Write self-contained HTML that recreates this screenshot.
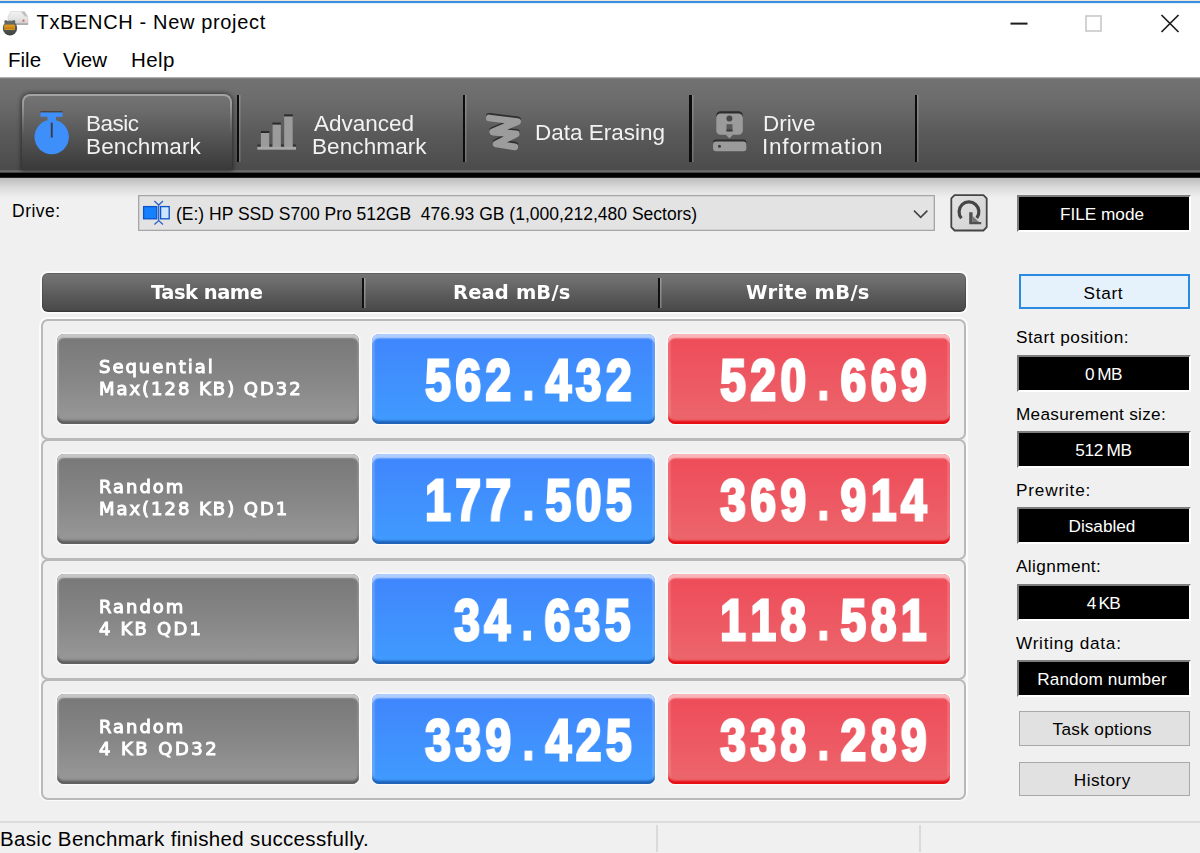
<!DOCTYPE html>
<html lang="en">
<head>
<meta charset="utf-8">
<title>TxBENCH - New project</title>
<style>
html,body{margin:0;padding:0;}
body{width:1200px;height:853px;overflow:hidden;background:#f0f0f0;position:relative;
  font-family:"Liberation Sans","DejaVu Sans",sans-serif;color:#000;}
.abs{position:absolute;}
.t{position:absolute;white-space:nowrap;line-height:1;transform-origin:0 0;}
/* title + menu */
#titlebar{left:0;top:0;width:1200px;height:78px;background:#fff;}
#topline{left:0;top:0;width:1200px;height:4px;background:linear-gradient(#efe6d6 0,#efe6d6 1px,#3b8fe3 1px,#3b8fe3 3px,#cfe3f7 3px,#fff 4px);}
/* toolbar */
#toolbar{left:0;top:77px;width:1200px;height:94px;background:linear-gradient(#d8d8d8 0,#8a8a8a 1px,#727272 2px,#6c6c6c 25%,#5a5a5a 60%,#4b4b4b 100%);}
#blackline{left:0;top:170px;width:1200px;height:8px;background:linear-gradient(#525252 0,#6e6e6e .8px,#6e6e6e 2.2px,#000 3px,#000 7.3px,#888 8px);}
#shine{left:0;top:178px;width:1200px;height:20px;background:linear-gradient(#bdbdbd 0,#c6c6c6 3px,#dcdcdc 10px,#f0f0f0 20px);}
.tabsep{width:2.2px;top:95px;height:66.5px;background:#0c0c0c;box-shadow:1.5px 0 0 rgba(255,255,255,.2);}
#tabsel{left:21.5px;top:94px;width:210px;height:76.3px;box-sizing:border-box;border-radius:8px 8px 0 0;background:linear-gradient(#757575 0,#696969 25%,#4c4c4c 70%,#393939 100%);box-shadow:0 0 4px 1px rgba(0,0,0,.5);}
#tabbd{left:21.5px;top:94px;width:210px;height:76px;box-sizing:border-box;border:2px solid #a4a4a4;border-bottom:none;border-radius:8px 8px 0 0;-webkit-mask-image:linear-gradient(#000 0,rgba(0,0,0,.9) 10%,rgba(0,0,0,.3) 35%,transparent 55%);mask-image:linear-gradient(#000 0,rgba(0,0,0,.9) 10%,rgba(0,0,0,.3) 35%,transparent 55%);}
.tabtxt{color:#f2f2f2;font-size:22.5px;will-change:transform;}
/* content */
.lbl{font-size:17.2px;color:#000;}
.blackbox{left:1017px;width:174px;height:37px;box-sizing:border-box;background:#000;border:2px solid;border-color:#7d7d7d #fff #fff #7d7d7d;color:#fff;font-size:17.2px;text-align:center;line-height:35px;white-space:nowrap;padding-right:4px;}
.btn{left:1018.7px;width:171.2px;height:34.8px;box-sizing:border-box;background:#e1e1e1;border:1px solid #a9a9a9;font-size:17.2px;text-align:center;line-height:35px;white-space:nowrap;padding-right:4px;}
#hdr{left:41.5px;top:272.8px;width:924.3px;height:39.5px;border-radius:6px;background:linear-gradient(#757575 0,#6b6b6b 25%,#595959 60%,#4a4a4a 94%,#3e3e3e 100%);box-shadow:0 0 0 1.8px rgba(255,255,255,.8), inset 0 0 0 1px rgba(0,0,0,.16);}
.hsep{width:2.4px;top:277.6px;height:30.3px;background:#101010;box-shadow:1.5px 0 0 rgba(255,255,255,.3);}
.htxt{will-change:transform;color:#fff;font-family:"DejaVu Sans","Liberation Sans",sans-serif;font-weight:bold;font-size:19.5px;}
.row{left:41px;width:925px;height:121px;box-sizing:border-box;border:2px solid #b9b9b9;border-radius:7px;}
#rowsbg{left:39.4px;top:317.2px;width:928.2px;height:484px;border-radius:8.5px;background:rgba(255,255,255,.7);}
#rowsbg2{left:41.3px;top:319px;width:924.5px;height:480px;border-radius:6.5px;background:#f0f0f0;}
.cell{height:89.6px;box-sizing:border-box;border-radius:7px;}
.task{left:56.8px;width:302px;background:linear-gradient(#757575 0,#7a7a7a 8%,#868686 50%,#969696 92%,#8a8a8a 100%);box-shadow:0 0 0 1.5px rgba(255,255,255,.6), inset 0 4px 1.5px #c6c6c6, inset 0 -3.2px 2px #606060, inset 2px 0 1px #9c9c9c, inset -2px 0 1px #8c8c8c;}
.rd{left:372.2px;width:282.6px;background:linear-gradient(#3f85fd 0,#4090fd 50%,#409bfe 100%);box-shadow:0 0 0 1.5px rgba(255,255,255,.6), inset 0 4.2px 1.5px #b2cefe, inset 0 -3.2px 2px #1f62b8, inset 2.5px 0 1.5px rgba(255,255,255,.22), inset -2.5px 0 1.5px rgba(255,255,255,.22);}
.wr{left:668px;width:282.2px;background:linear-gradient(#ee4b58 0,#ed5862 50%,#ec676d 100%);box-shadow:0 0 0 1.5px rgba(255,255,255,.6), inset 0 4.2px 1.5px #f9b6ba, inset 0 -3.2px 2px #e60f14, inset 2.5px 0 1.5px rgba(255,255,255,.2), inset -2.5px 0 1.5px rgba(255,255,255,.2);}
.tasktxt{will-change:transform;color:#fff;font-family:"DejaVu Sans","Liberation Sans",sans-serif;font-size:18px;letter-spacing:1.97px;-webkit-text-stroke:1px #fff;}
.num{will-change:transform;color:#fff;font-weight:bold;font-size:57.2px;-webkit-text-stroke:3px #fff;transform:scaleX(.805);}
.num span{display:inline-block;width:37.4px;text-align:center;}
.num .dot{-webkit-text-stroke:1.2px #fff;}
#status{left:0;top:821px;width:1200px;height:32px;border-top:2px solid #dcdcdc;background:#f0f0f0;box-sizing:border-box;}
.ssep{width:2px;top:825px;height:26.5px;background:#dadada;}
</style>
</head>
<body>
<div id="titlebar" class="abs"></div>
<div id="topline" class="abs"></div>
<div id="toolbar" class="abs"></div>
<div id="blackline" class="abs"></div>
<div id="shine" class="abs"></div>


<!-- title text -->
<div class="t" id="title" style="left:36.6px;top:11.6px;font-size:20px;letter-spacing:.65px;">TxBENCH - New project</div>
<div class="t" id="m1" style="left:8px;top:49.8px;font-size:20.5px;">File</div>
<div class="t" id="m2" style="left:63px;top:49.8px;font-size:20.5px;">View</div>
<div class="t" id="m3" style="left:131px;top:49.8px;font-size:20.5px;letter-spacing:.4px;">Help</div>

<!-- tabs -->
<div id="tabsel" class="abs"></div>
<div id="tabbd" class="abs"></div>
<div class="abs tabsep" style="left:237.3px"></div>
<div class="abs tabsep" style="left:463.3px"></div>
<div class="abs tabsep" style="left:689.4px"></div>
<div class="abs tabsep" style="left:915px"></div>
<div class="t tabtxt" id="tb1a" style="left:85.8px;top:113px;letter-spacing:-.5px;">Basic</div>
<div class="t tabtxt" id="tb1b" style="left:85.8px;top:135.5px;letter-spacing:.12px;">Benchmark</div>
<div class="t tabtxt" id="tb2a" style="left:314px;top:113px;">Advanced</div>
<div class="t tabtxt" id="tb2b" style="left:312.4px;top:135.5px;letter-spacing:.1px;">Benchmark</div>
<div class="t tabtxt" id="tb3" style="left:534.5px;top:121.9px;">Data Erasing</div>
<div class="t tabtxt" id="tb4a" style="left:762.5px;top:113px;">Drive</div>
<div class="t tabtxt" id="tb4b" style="left:761.8px;top:135.5px;letter-spacing:.8px;">Information</div>

<!-- drive row -->
<div class="t lbl" id="drvlbl" style="left:12px;top:203px;font-size:17.5px;letter-spacing:.5px;">Drive:</div>
<div class="abs" id="combo" style="left:138px;top:195px;width:797px;height:36px;box-sizing:border-box;border:1px solid #a6a6a6;background:#e3e3e3;box-shadow:inset 0 0 0 .6px rgba(160,160,160,.5);"></div>
<div class="t lbl" id="drvtxt" style="left:176px;top:206px;font-size:17.5px;">(E:) HP SSD S700 Pro 512GB&nbsp; 476.93 GB (1,000,212,480 Sectors)</div>
<div class="abs blackbox" id="bb0" style="top:194.75px;"><span id="bb0t">FILE mode</span></div>

<!-- header -->
<div id="hdr" class="abs"></div>
<div class="abs hsep" style="left:361.8px"></div>
<div class="abs hsep" style="left:657.6px"></div>
<div class="t htxt" id="h1" style="left:151px;top:282.8px;letter-spacing:-.5px;">Task name</div>
<div class="t htxt" id="h2" style="left:452.5px;top:282.8px;letter-spacing:.15px;">Read mB/s</div>
<div class="t htxt" id="h3" style="left:745.5px;top:282.8px;letter-spacing:.3px;">Write mB/s</div>

<!-- rows -->
<div class="abs" id="rowsbg"></div>
<div class="abs" id="rowsbg2"></div>
<div class="abs row" style="top:318.6px"></div>
<div class="abs row" style="top:438.6px"></div>
<div class="abs row" style="top:558.6px"></div>
<div class="abs row" style="top:678.6px"></div>

<div class="abs cell task" style="top:334.3px"></div>
<div class="abs cell rd" style="top:334.3px"></div>
<div class="abs cell wr" style="top:334.3px"></div>
<div class="abs cell task" style="top:454.3px"></div>
<div class="abs cell rd" style="top:454.3px"></div>
<div class="abs cell wr" style="top:454.3px"></div>
<div class="abs cell task" style="top:574.3px"></div>
<div class="abs cell rd" style="top:574.3px"></div>
<div class="abs cell wr" style="top:574.3px"></div>
<div class="abs cell task" style="top:694.3px"></div>
<div class="abs cell rd" style="top:694.3px"></div>
<div class="abs cell wr" style="top:694.3px"></div>

<div class="t tasktxt" id="k1a" style="left:98.6px;top:358.3px;">Sequential</div>
<div class="t tasktxt" id="k1b" style="left:98.6px;top:380.0px;">Max(128 KB) QD32</div>
<div class="t tasktxt" id="k2a" style="left:98.6px;top:478.3px;">Random</div>
<div class="t tasktxt" id="k2b" style="left:98.6px;top:500.0px;">Max(128 KB) QD1</div>
<div class="t tasktxt" id="k3a" style="left:98.6px;top:598.3px;">Random</div>
<div class="t tasktxt" id="k3b" style="left:98.6px;top:620.0px;letter-spacing:2.2px;">4 KB QD1</div>
<div class="t tasktxt" id="k4a" style="left:98.6px;top:718.3px;">Random</div>
<div class="t tasktxt" id="k4b" style="left:98.6px;top:740.0px;letter-spacing:2.45px;">4 KB QD32</div>

<div class="t num" id="n1r" style="left:423.2px;top:351.6px;"><span>5</span><span>6</span><span>2</span><span class="dot">.</span><span>4</span><span>3</span><span>2</span></div>
<div class="t num" id="n1w" style="left:718.2px;top:351.6px;"><span>5</span><span>2</span><span>0</span><span class="dot">.</span><span>6</span><span>6</span><span>9</span></div>
<div class="t num" id="n2r" style="left:423.2px;top:471.6px;"><span>1</span><span>7</span><span>7</span><span class="dot">.</span><span>5</span><span>0</span><span>5</span></div>
<div class="t num" id="n2w" style="left:718.2px;top:471.6px;"><span>3</span><span>6</span><span>9</span><span class="dot">.</span><span>9</span><span>1</span><span>4</span></div>
<div class="t num" id="n3r" style="left:452.2px;top:591.6px;"><span>3</span><span>4</span><span class="dot">.</span><span>6</span><span>3</span><span>5</span></div>
<div class="t num" id="n3w" style="left:718.2px;top:591.6px;"><span>1</span><span>1</span><span>8</span><span class="dot">.</span><span>5</span><span>8</span><span>1</span></div>
<div class="t num" id="n4r" style="left:423.2px;top:711.6px;"><span>3</span><span>3</span><span>9</span><span class="dot">.</span><span>4</span><span>2</span><span>5</span></div>
<div class="t num" id="n4w" style="left:718.2px;top:711.6px;"><span>3</span><span>3</span><span>8</span><span class="dot">.</span><span>2</span><span>8</span><span>9</span></div>

<!-- right panel -->
<div class="abs" id="start" style="left:1018.7px;top:274.2px;width:171.5px;height:34.8px;box-sizing:border-box;border:2px solid #2a8ae2;background:#e5f1fb;font-size:17.2px;text-align:center;line-height:34px;letter-spacing:.7px;padding-right:2px;"><span id="startt">Start</span></div>
<div class="t lbl" id="l1" style="left:1016px;top:329.2px;letter-spacing:0.53px;">Start position:</div>
<div class="abs blackbox" id="bb1" style="top:354.6px;"><span id="bb1t" style="position:relative;left:1.5px;word-spacing:-1.2px;letter-spacing:-.5px">0 MB</span></div>
<div class="t lbl" id="l2" style="left:1016px;top:405.6px;letter-spacing:0.28px;">Measurement size:</div>
<div class="abs blackbox" id="bb2" style="top:430.9px;"><span id="bb2t" style="position:relative;left:1.5px;word-spacing:-1px;letter-spacing:-.3px">512 MB</span></div>
<div class="t lbl" id="l3" style="left:1016px;top:481.9px;letter-spacing:0.82px;">Prewrite:</div>
<div class="abs blackbox" id="bb3" style="top:507.3px;"><span id="bb3t">Disabled</span></div>
<div class="t lbl" id="l4" style="left:1016px;top:558.2px;letter-spacing:0.4px;">Alignment:</div>
<div class="abs blackbox" id="bb4" style="top:583.7px;"><span id="bb4t" style="position:relative;left:1.5px;word-spacing:-1.5px;letter-spacing:-.6px">4 KB</span></div>
<div class="t lbl" id="l5" style="left:1016px;top:634.6px;letter-spacing:0.73px;">Writing data:</div>
<div class="abs blackbox" id="bb5" style="top:660.1px;"><span id="bb5t" style="letter-spacing:.12px">Random number</span></div>
<div class="abs btn" id="b1" style="top:711.4px;"><span id="b1t" style="letter-spacing:.33px">Task options</span></div>
<div class="abs btn" id="b2" style="top:761.5px;"><span id="b2t" style="letter-spacing:.5px">History</span></div>

<!-- status -->
<div id="status" class="abs"></div>
<div class="abs ssep" style="left:656.3px"></div>
<div class="abs ssep" style="left:919px"></div>
<div class="t" id="st" style="left:0px;top:829px;font-size:20.5px;letter-spacing:.34px;">Basic Benchmark finished successfully.</div>
<!-- icons -->
<svg class="abs" id="ic-title" style="left:0;top:8px" width="34" height="30" viewBox="0 8 34 30">
  <defs>
    <linearGradient id="gdrv" x1="0" y1="0" x2="0" y2="1"><stop offset="0" stop-color="#f2f2f2"/><stop offset=".55" stop-color="#e4e4e4"/><stop offset="1" stop-color="#c9c9c9"/></linearGradient>
    <linearGradient id="gsw" x1="0" y1="0" x2="0" y2="1"><stop offset="0" stop-color="#6b7272"/><stop offset="1" stop-color="#3b4040"/></linearGradient>
  </defs>
  <path d="M10.5 11.5 L24.5 11.5 L28 17 L28 24.5 L8 24.5 L8 17 Z" fill="url(#gdrv)" stroke="#d0d0d0" stroke-width=".6"/>
  <path d="M21 11.8 L24.6 11.8 L27.6 16.5 L25 16.5 Z" fill="#b4b4b4" opacity=".8"/>
  <rect x="8" y="23.3" width="20" height="1.6" fill="#a9a9a9"/>
  <rect x="22.6" y="19.6" width="1.8" height="2" fill="#e8505a"/>
  <ellipse cx="10" cy="28" rx="7.2" ry="7.6" fill="url(#gsw)"/>
  <rect x="4.4" y="20.2" width="3" height="3" rx="1" fill="#5c6262"/>
  <rect x="12.2" y="20.2" width="3" height="3" rx="1" fill="#5c6262"/>
  <rect x="4.2" y="24.4" width="10.8" height="5.6" rx="1.2" fill="#d8961c"/>
  <rect x="5" y="27.4" width="9.2" height="1.6" fill="#b87410" opacity=".7"/>
</svg>

<svg class="abs" id="ic-win" style="left:1000px;top:8px" width="200" height="32" viewBox="1000 8 200 32">
  <rect x="1010.5" y="22.6" width="17" height="2" fill="#1c1c1c"/>
  <rect x="1086" y="16" width="15" height="15" fill="none" stroke="#c8c8c8" stroke-width="1.6"/>
  <path d="M1161.5 15 L1178.5 32 M1178.5 15 L1161.5 32" stroke="#1c1c1c" stroke-width="1.7" fill="none"/>
</svg>

<svg class="abs" id="ic-tabs" style="left:30px;top:105px" width="730" height="52" viewBox="30 105 730 52">
  <!-- stopwatch -->
  <rect x="40.5" y="111.2" width="22" height="1.6" fill="#4a3a30"/>
  <rect x="40.5" y="112.4" width="22" height="4.4" fill="#3f8ffb"/>
  <rect x="47.5" y="116" width="8.5" height="6" fill="#3f8ffb"/>
  <circle cx="51.7" cy="137" r="17.2" fill="#3f8ffb"/>
  <rect x="50.8" y="122.6" width="1.9" height="15" fill="#3a3a44"/>
  <!-- bars -->
  <rect x="257.3" y="144.4" width="38.7" height="2.6" fill="#2c2c2c" opacity=".75"/>
  <rect x="260.8" y="131" width="8.5" height="16" fill="#2a2a2a"/>
  <rect x="260.8" y="133" width="8.5" height="14" fill="#9b9b9b"/>
  <rect x="272.4" y="122.6" width="8.5" height="24.4" fill="#2a2a2a"/>
  <rect x="272.4" y="124.6" width="8.5" height="22.4" fill="#9b9b9b"/>
  <rect x="284.1" y="114.4" width="8.7" height="32.6" fill="#2a2a2a"/>
  <rect x="284.1" y="116.4" width="8.7" height="30.6" fill="#9b9b9b"/>
  <rect x="257.3" y="146.8" width="38.7" height="2.9" fill="#a8a8a8"/>
  <!-- squiggle -->
  <polyline points="489.3,116.4 517.6,119.9 492.8,130.4 516.2,132.4 496.2,142.4 514.8,145.2" fill="none" stroke="#2e2e2e" stroke-width="6.8" stroke-linecap="round" stroke-linejoin="round"/>
  <polyline points="489.3,118 517.6,121.5 492.8,132 516.2,134 496.2,144 514.8,146.8" fill="none" stroke="#9c9c9c" stroke-width="6.8" stroke-linecap="round" stroke-linejoin="round"/>
  <!-- drive info -->
  <rect x="716.2" y="111.2" width="26.7" height="22" rx="4.5" fill="#2c2c2c"/>
  <rect x="716.2" y="113.4" width="26.7" height="21.4" rx="4.5" fill="#9b9b9b"/>
  <path d="M725.6 134.4 L733.2 134.4 L729.4 138.6 Z" fill="#9b9b9b"/>
  <circle cx="729.4" cy="118.6" r="3" fill="#474747"/>
  <rect x="726.5" y="124.2" width="6" height="7.2" fill="#5a5a5a"/>
  <rect x="726.5" y="129.4" width="6" height="2" fill="#3c3c3c"/>
  <rect x="713" y="139.4" width="33.4" height="10" rx="3.2" fill="#2c2c2c"/>
  <rect x="713" y="141.5" width="33.4" height="9.8" rx="3.2" fill="#9b9b9b"/>
  <circle cx="719.5" cy="146.3" r="1.5" fill="#3a3a3a"/>
</svg>

<svg class="abs" id="ic-drv" style="left:140px;top:198px" width="34" height="30" viewBox="140 198 34 30">
  <rect x="143.6" y="206.6" width="13.2" height="12.2" fill="#1680ff" stroke="#0a55c8" stroke-width="1.3"/>
  <rect x="160.6" y="206.6" width="8.6" height="12.2" fill="#cfe5ff" stroke="#0a55c8" stroke-width="1.3"/>
  <path d="M154.4 201 L158.7 205 L163 201 M158.7 204.6 L158.7 220.8 M154.4 224.6 L158.7 220.6 L163 224.6" fill="none" stroke="#2a62c8" stroke-width="1.3"/>
</svg>

<svg class="abs" id="ic-combo" style="left:905px;top:190px" width="90" height="46" viewBox="905 190 90 46">
  <defs><linearGradient id="grf" x1="0" y1="0" x2="1" y2="1"><stop offset="0" stop-color="#e2e2e2"/><stop offset="1" stop-color="#d2d2d2"/></linearGradient></defs>
  <path d="M914 210.6 L920.7 217.4 L927.4 210.6" fill="none" stroke="#444" stroke-width="1.6"/>
  <path d="M954.6 195.1 L983.4 195.1 L986.7 198.4 L986.7 227.2 L983.4 230.5 L954.6 230.5 L951.3 227.2 L951.3 198.4 Z" fill="url(#grf)" stroke="#444" stroke-width="1.8" stroke-linejoin="round"/>
  <path d="M961.4 218.2 A9.9 9.9 0 1 1 976.8 217.9" fill="none" stroke="#454545" stroke-width="3.2"/>
  <path d="M969.2 212.2 L969.2 224.2 L981.2 224.2 L981.2 222 L972.6 222 L972.6 212.2 Z" fill="#505050"/>
  <path d="M972.6 222 L972.6 216 L979 222 Z" fill="#777"/>
</svg>

</body>
</html>
